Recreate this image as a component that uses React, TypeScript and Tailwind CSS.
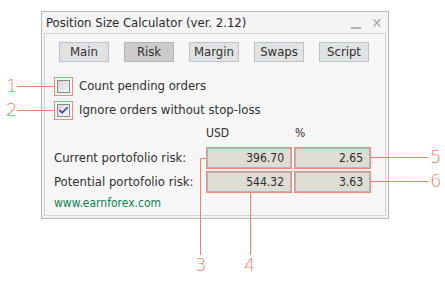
import { Check } from "lucide-react";

const tabs = ["Main", "Risk", "Margin", "Swaps", "Script"];

const Callout = ({ n, className }: { n: string; className: string }) => (
  <span
    className={`absolute text-[18px] leading-none text-[#f4806c] ${className}`}
    style={{ fontFamily: '"DejaVu Sans", sans-serif', fontWeight: 200 }}
  >
    {n}
  </span>
);

const Checkbox = ({ checked }: { checked?: boolean }) => (
  <div className="ml-[9px] flex h-[19px] w-[19px] items-center justify-center border border-[#f28b79]">
    <div className="flex h-[13px] w-[13px] items-center justify-center border border-[#8a8a8a] bg-gradient-to-br from-[#d6d6d6] to-[#f6f6f6]">
      {checked && <Check className="h-[11px] w-[11px] text-[#2e3f9c]" strokeWidth={3.5} />}
    </div>
  </div>
);

const Field = ({ value, w }: { value: string; w: string }) => (
  <div className={`h-[22px] border border-[#f28b79] ${w}`}>
    <div className="flex h-full items-center justify-end border border-[#a9b7c6] bg-[#deddd4] pr-[6px] text-[#2b2b2b]">
      {value}
    </div>
  </div>
);

export default function App() {
  return (
    <div
      className="relative h-[281px] w-[445px] overflow-hidden bg-white text-[12px] text-[#303030]"
      style={{ fontFamily: '"DejaVu Sans Condensed", "DejaVu Sans", sans-serif' }}
    >
      <div className="pl-[41px] pt-[11px]">
        <div className="flex h-[208px] w-[348px] flex-col border border-[#b8b8b8] bg-[#f4f4f4]">
          {/* title bar */}
          <div className="flex h-[21px] items-center justify-between pl-[4px] pr-[6px]">
            <span className="text-[13px] text-[#2a2a2a]">Position Size Calculator (ver. 2.12)</span>
            <div className="flex items-center gap-[10px] text-[#a8a8a8]">
              <div className="mt-[10px] h-[2px] w-[10px] bg-[#b0b0b0]" />
              <span className="text-[14px] font-bold leading-none">✕</span>
            </div>
          </div>

          {/* panel */}
          <div className="mx-[2px] mb-[2px] flex-1 border border-[#d4d4d4] bg-[#f6f6f6]">
            <div className="flex gap-[15px] pl-[14px] pt-[8px]">
              {tabs.map((t) => (
                <div
                  key={t}
                  className={`flex h-[20px] w-[50px] items-center justify-center border text-[13px] ${
                    t === "Risk"
                      ? "border-[#b4b4b4] bg-[#cbcbcb]"
                      : "border-[#b6c2cc] bg-[#e2e2e2]"
                  }`}
                >
                  {t}
                </div>
              ))}
            </div>

            <div className="mt-[12px] flex h-[24px] items-center">
              <Checkbox />
              <span className="ml-[6px] text-[13px]">Count pending orders</span>
            </div>
            <div className="flex h-[24px] items-center">
              <Checkbox checked />
              <span className="ml-[6px] text-[13px]">Ignore orders without stop-loss</span>
            </div>

            <div className="flex h-[22px] items-center pl-[161px]">
              <span className="w-[89px]">USD</span>
              <span>%</span>
            </div>

            <div className="mt-[3px] flex items-center pl-[9px]">
              <span className="w-[152px] text-[13px]">Current portofolio risk:</span>
              <Field value="396.70" w="w-[86px]" />
              <div className="w-[2px]" />
              <Field value="2.65" w="w-[77px]" />
            </div>
            <div className="mt-[2px] flex items-center pl-[9px]">
              <span className="w-[152px] text-[13px]">Potential portofolio risk:</span>
              <Field value="544.32" w="w-[86px]" />
              <div className="w-[2px]" />
              <Field value="3.63" w="w-[77px]" />
            </div>

            <div className="flex h-[20px] items-center pl-[9px] text-[#0e7f52]">www.earnforex.com</div>
          </div>
        </div>
      </div>

      {/* callouts */}
      <div className="absolute left-[17px] top-[86px] h-px w-[37px] bg-[#f4806c]" />
      <Callout n="1" className="left-[6px] top-[77px]" />
      <div className="absolute left-[17px] top-[110px] h-px w-[37px] bg-[#f4806c]" />
      <Callout n="2" className="left-[6px] top-[101px]" />

      <div className="absolute left-[371px] top-[157px] h-px w-[57px] bg-[#f4806c]" />
      <Callout n="5" className="left-[430px] top-[148px]" />
      <div className="absolute left-[371px] top-[181px] h-px w-[57px] bg-[#f4806c]" />
      <Callout n="6" className="left-[430px] top-[172px]" />

      <div className="absolute left-[200px] top-[158px] h-px w-[6px] bg-[#f4806c]" />
      <div className="absolute left-[200px] top-[158px] h-[97px] w-px bg-[#f4806c]" />
      <Callout n="3" className="left-[195px] top-[256px]" />
      <div className="absolute left-[250px] top-[193px] h-[62px] w-px bg-[#f4806c]" />
      <Callout n="4" className="left-[244px] top-[256px]" />
    </div>
  );
}
